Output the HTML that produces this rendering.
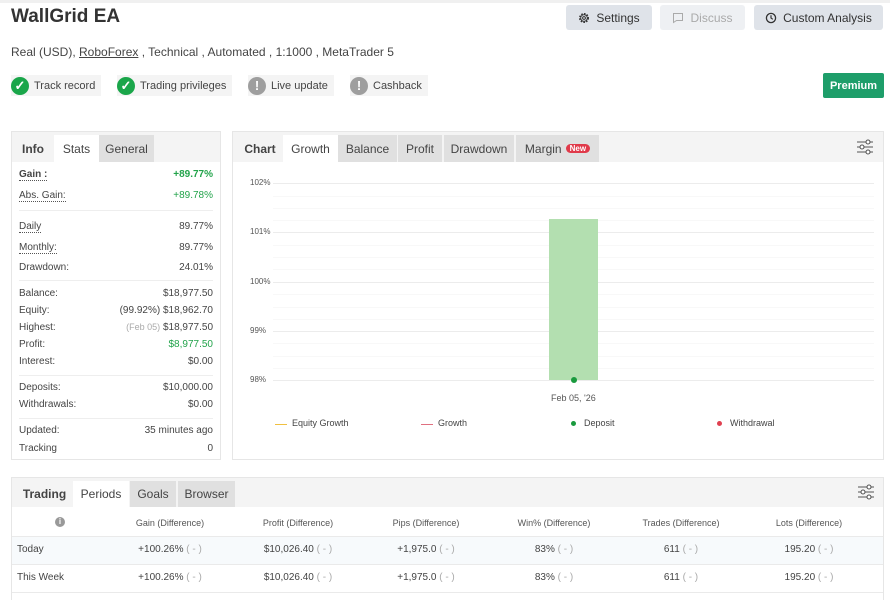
<!DOCTYPE html>
<html><head><meta charset="utf-8"><style>
*{margin:0;padding:0;box-sizing:border-box}
body{width:890px;height:600px;overflow:hidden;background:#fff;font-family:"Liberation Sans",sans-serif;color:#333;position:relative}
.a{position:absolute}
.btn{position:absolute;top:5px;height:25px;background:#dfe3e9;border-radius:3px;font-size:12px;color:#333;display:flex;align-items:center;justify-content:center;gap:6px}
.badge{position:absolute;top:75px;height:21px;background:#f4f4f4;font-size:11px;color:#444;display:flex;align-items:center;gap:5px;padding-right:6px}
.ic{width:18px;height:18px;border-radius:50%;display:flex;align-items:center;justify-content:center;color:#fff;font-weight:bold;font-size:13px}
.panel{position:absolute;border:1px solid #e6e6e6;background:#fff}
.tabbar{position:absolute;left:0;right:0;top:0;height:30px;background:#f4f4f4}
.tab{position:absolute;top:3px;height:27px;font-size:12px;display:flex;align-items:center;justify-content:center;color:#444}
.row{position:absolute;left:7px;right:7px;font-size:10px;color:#444;display:flex;justify-content:space-between}
.g{color:#22a34a}
.sep{position:absolute;left:7px;right:7px;height:1px;background:#eee}
.yl{position:absolute;left:17px;font-size:8px;color:#555}
.gl{position:absolute;left:40px;width:601px;height:1px;background:#ececec}
.gl2{position:absolute;left:40px;width:601px;height:1px;background:#f8f8f8}
.th{position:absolute;top:40px;font-size:9px;color:#555;transform:translateX(-50%);white-space:nowrap}
.td{position:absolute;font-size:10px;color:#444;transform:translateX(-50%);white-space:nowrap}
.d{color:#aaa}
</style></head><body>
<div class="a" style="left:0;top:0;width:890px;height:3px;background:#f0f0f0"></div>
<div class="a" style="left:11px;top:6px;font-size:19px;font-weight:bold;color:#333">WallGrid EA</div>
<div class="btn" style="left:566px;width:86px"><svg width="12" height="12" viewBox="0 0 12 12"><circle cx="6" cy="6" r="4.2" fill="none" stroke="#333" stroke-width="1.6" stroke-dasharray="1.6 1.2"/><circle cx="6" cy="6" r="3.3" fill="none" stroke="#333" stroke-width="0.9"/><circle cx="6" cy="6" r="1.4" fill="none" stroke="#333" stroke-width="1"/></svg>Settings</div>
<div class="btn" style="left:660px;width:85px;background:#eef0f3;color:#aaa"><svg width="12" height="12" viewBox="0 0 12 12"><path d="M1.5 1.5h9v7h-6l-3 2z" fill="none" stroke="#aaa" stroke-width="1"/></svg>Discuss</div>
<div class="btn" style="left:754px;width:129px"><svg width="12" height="12" viewBox="0 0 12 12"><circle cx="6" cy="6" r="4.6" fill="none" stroke="#333" stroke-width="1.3"/><path d="M6 3.3V6l1.8 1.3" fill="none" stroke="#333" stroke-width="1.2"/></svg>Custom Analysis</div>
<div class="a" style="left:11px;top:45px;font-size:12px;color:#444">Real (USD), <span style="text-decoration:underline">RoboForex</span> , Technical , Automated , 1:1000 , MetaTrader 5</div>
<div class="badge" style="left:11px"><div class="ic" style="background:#1aa64a">✓</div>Track record</div>
<div class="badge" style="left:117px"><div class="ic" style="background:#1aa64a">✓</div>Trading privileges</div>
<div class="badge" style="left:248px"><div class="ic" style="background:#9e9e9e">!</div>Live update</div>
<div class="badge" style="left:350px"><div class="ic" style="background:#9e9e9e">!</div>Cashback</div>
<div class="a" style="left:823px;top:73px;width:61px;height:25px;background:#1e9e6a;border-radius:2px;color:#fff;font-size:11px;font-weight:bold;display:flex;align-items:center;justify-content:center">Premium</div>

<div class="panel" style="left:11px;top:131px;width:210px;height:329px">
<div class="tabbar"></div>
<div class="tab" style="left:0;width:42px;font-weight:bold">Info</div>
<div class="tab" style="left:42px;width:45px;background:#fff">Stats</div>
<div class="tab" style="left:87px;width:55px;background:#e0e0e0">General</div>
<div class="row" style="top:37px"><span style="font-weight:bold;border-bottom:1px dotted #555">Gain :</span><span class="g" style="font-weight:bold">+89.77%</span></div>
<div class="row" style="top:58px"><span style="border-bottom:1px dotted #555">Abs. Gain:</span><span class="g">+89.78%</span></div>
<div class="sep" style="top:78px"></div>
<div class="row" style="top:89px"><span style="border-bottom:1px dotted #555">Daily</span><span>89.77%</span></div>
<div class="row" style="top:110px"><span style="border-bottom:1px dotted #555">Monthly:</span><span>89.77%</span></div>
<div class="row" style="top:130px"><span>Drawdown:</span><span>24.01%</span></div>
<div class="sep" style="top:148px"></div>
<div class="row" style="top:156px"><span>Balance:</span><span>$18,977.50</span></div>
<div class="row" style="top:173px"><span>Equity:</span><span>(99.92%) $18,962.70</span></div>
<div class="row" style="top:190px"><span>Highest:</span><span><span class="d" style="font-size:9px">(Feb 05)</span> $18,977.50</span></div>
<div class="row" style="top:207px"><span>Profit:</span><span class="g">$8,977.50</span></div>
<div class="row" style="top:224px"><span>Interest:</span><span>$0.00</span></div>
<div class="sep" style="top:243px"></div>
<div class="row" style="top:250px"><span>Deposits:</span><span>$10,000.00</span></div>
<div class="row" style="top:267px"><span>Withdrawals:</span><span>$0.00</span></div>
<div class="sep" style="top:286px"></div>
<div class="row" style="top:293px"><span>Updated:</span><span>35 minutes ago</span></div>
<div class="row" style="top:311px"><span>Tracking</span><span>0</span></div>
</div>

<div class="panel" style="left:232px;top:131px;width:652px;height:329px">
<div class="tabbar"></div>
<div class="tab" style="left:4px;width:46px;font-weight:bold">Chart</div>
<div class="tab" style="left:50px;width:55px;background:#fff">Growth</div>
<div class="tab" style="left:105px;width:59px;background:#e0e0e0">Balance</div>
<div class="tab" style="left:165px;width:44px;background:#e0e0e0">Profit</div>
<div class="tab" style="left:211px;width:70px;background:#e0e0e0">Drawdown</div>
<div class="tab" style="left:283px;width:83px;background:#e0e0e0">Margin <span style="background:#e03a4a;color:#fff;font-size:8px;border-radius:7px;padding:0 4px;margin-left:4px;font-weight:bold">New</span></div>
<svg class="a" style="left:623px;top:7px" width="18" height="16" viewBox="0 0 18 16"><g stroke="#555" stroke-width="1.1" fill="#fff"><path d="M1 3h16M1 8h16M1 13h16"/><circle cx="12" cy="3" r="2"/><circle cx="6" cy="8" r="2"/><circle cx="12" cy="13" r="2"/></g></svg>
<div class="gl2" style="top:76px"></div><div class="gl2" style="top:125px"></div><div class="gl2" style="top:175px"></div><div class="gl2" style="top:224px"></div>
<div class="gl2" style="top:64px"></div><div class="gl2" style="top:88px"></div><div class="gl2" style="top:113px"></div><div class="gl2" style="top:137px"></div><div class="gl2" style="top:162px"></div><div class="gl2" style="top:187px"></div><div class="gl2" style="top:211px"></div><div class="gl2" style="top:236px"></div>
<div class="gl" style="top:51px"></div><div class="gl" style="top:100px"></div><div class="gl" style="top:150px"></div><div class="gl" style="top:199px"></div><div class="gl" style="top:248px"></div>
<div class="yl" style="top:46px">102%</div><div class="yl" style="top:95px">101%</div><div class="yl" style="top:145px">100%</div><div class="yl" style="top:194px">99%</div><div class="yl" style="top:243px">98%</div>
<div class="a" style="left:316px;top:87px;width:49px;height:161px;background:#b3dfb0"></div>
<div class="a" style="left:338px;top:245px;width:6px;height:6px;border-radius:50%;background:#1a9a3e"></div>
<div class="a" style="left:318px;top:261px;font-size:9px;color:#555">Feb 05, '26</div>
<div class="a" style="left:42px;top:292px;width:12px;height:1px;background:#f0c040"></div>
<div class="a" style="left:59px;top:286px;font-size:9px;color:#444">Equity Growth</div>
<div class="a" style="left:188px;top:292px;width:12px;height:1px;background:#e07080"></div>
<div class="a" style="left:205px;top:286px;font-size:9px;color:#444">Growth</div>
<div class="a" style="left:338px;top:289px;width:5px;height:5px;border-radius:50%;background:#1a9a3e"></div>
<div class="a" style="left:351px;top:286px;font-size:9px;color:#444">Deposit</div>
<div class="a" style="left:484px;top:289px;width:5px;height:5px;border-radius:50%;background:#e04050"></div>
<div class="a" style="left:497px;top:286px;font-size:9px;color:#444">Withdrawal</div>
</div>

<div class="panel" style="left:11px;top:477px;width:873px;height:123px;border-bottom:none">
<div class="tabbar" style="height:29px"></div>
<div class="tab" style="left:4px;width:57px;height:26px;font-weight:bold">Trading</div>
<div class="tab" style="left:61px;width:56px;height:26px;background:#fff">Periods</div>
<div class="tab" style="left:118px;width:46px;height:26px;background:#e0e0e0">Goals</div>
<div class="tab" style="left:166px;width:57px;height:26px;background:#e0e0e0">Browser</div>
<svg class="a" style="left:845px;top:6px" width="18" height="16" viewBox="0 0 18 16"><g stroke="#555" stroke-width="1.1" fill="#fff"><path d="M1 3h16M1 8h16M1 13h16"/><circle cx="12" cy="3" r="2"/><circle cx="6" cy="8" r="2"/><circle cx="12" cy="13" r="2"/></g></svg>
<div class="a" style="left:43px;top:39px;width:10px;height:10px;border-radius:50%;background:#999;color:#fff;font-size:8px;font-weight:bold;text-align:center;line-height:10px">i</div>
<div class="th" style="left:158px">Gain (Difference)</div>
<div class="th" style="left:286px">Profit (Difference)</div>
<div class="th" style="left:414px">Pips (Difference)</div>
<div class="th" style="left:542px">Win% (Difference)</div>
<div class="th" style="left:669px">Trades (Difference)</div>
<div class="th" style="left:797px">Lots (Difference)</div>
<div class="a" style="left:0;right:0;top:58px;height:1px;background:#eaeaea"></div>
<div class="a" style="left:0;right:0;top:59px;height:27px;background:#f7fafc"></div>
<div class="a" style="left:0;right:0;top:86px;height:1px;background:#eaeaea"></div>
<div class="a" style="left:0;right:0;top:114px;height:1px;background:#eaeaea"></div>
<div class="a" style="left:5px;top:66px;font-size:10px;color:#444">Today</div>
<div class="a" style="left:5px;top:94px;font-size:10px;color:#444">This Week</div>
<div class="td g" style="left:158px;top:66px">+100.26% <span class="d">( - )</span></div>
<div class="td g" style="left:286px;top:66px">$10,026.40 <span class="d">( - )</span></div>
<div class="td g" style="left:414px;top:66px">+1,975.0 <span class="d">( - )</span></div>
<div class="td" style="left:542px;top:66px">83% <span class="d">( - )</span></div>
<div class="td" style="left:669px;top:66px">611 <span class="d">( - )</span></div>
<div class="td" style="left:797px;top:66px">195.20 <span class="d">( - )</span></div>
<div class="td g" style="left:158px;top:94px">+100.26% <span class="d">( - )</span></div>
<div class="td g" style="left:286px;top:94px">$10,026.40 <span class="d">( - )</span></div>
<div class="td g" style="left:414px;top:94px">+1,975.0 <span class="d">( - )</span></div>
<div class="td" style="left:542px;top:94px">83% <span class="d">( - )</span></div>
<div class="td" style="left:669px;top:94px">611 <span class="d">( - )</span></div>
<div class="td" style="left:797px;top:94px">195.20 <span class="d">( - )</span></div>
</div>
</body></html>
